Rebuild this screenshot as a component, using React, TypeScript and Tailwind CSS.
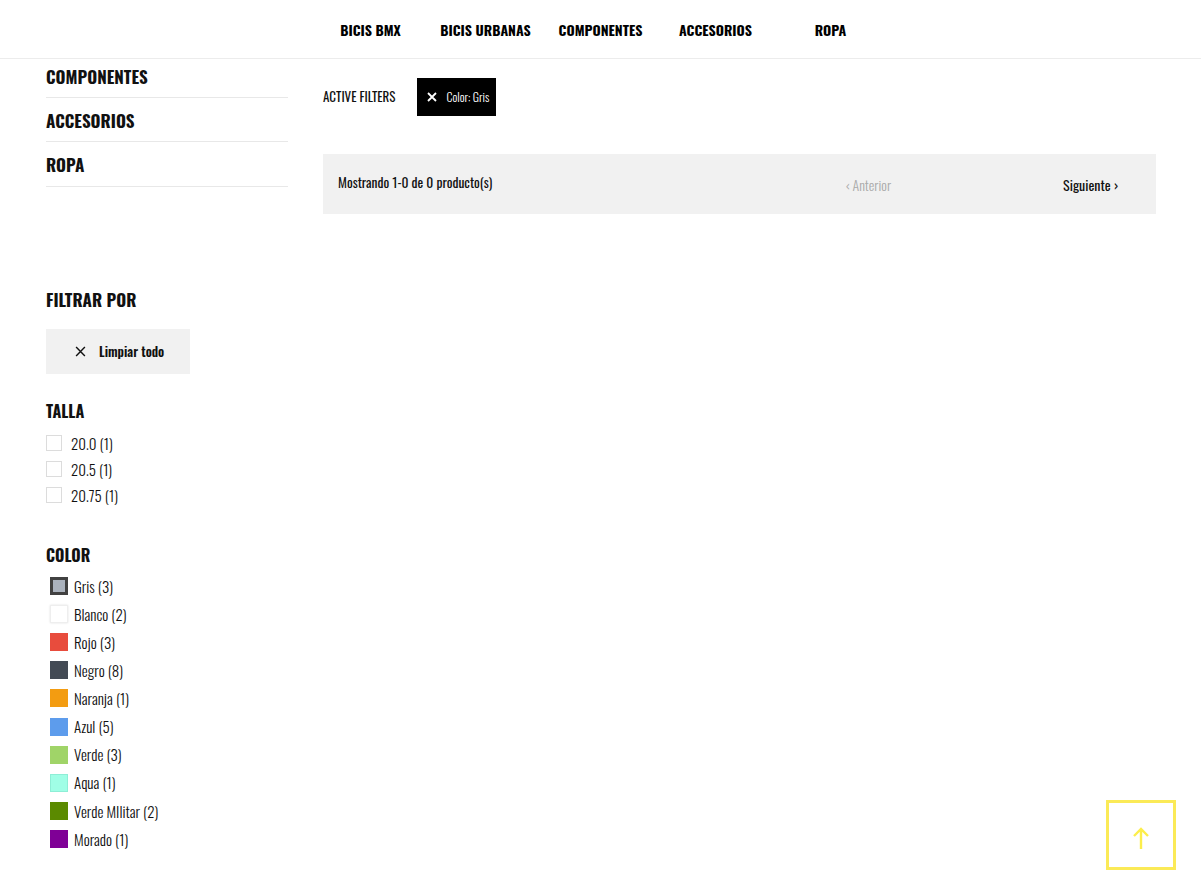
import React from "react";

const nav = ["BICIS BMX", "BICIS URBANAS", "COMPONENTES", "ACCESORIOS", "ROPA"];
const tallas = ["20.0 (1)", "20.5 (1)", "20.75 (1)"];
const colors: { name: string; count: string; cls: string }[] = [
  { name: "Gris", count: "(3)", cls: "bg-[#aab2bd] border-[3px] border-[#414141]" },
  { name: "Blanco", count: "(2)", cls: "bg-white border border-[#eeeeee] shadow-[0_0_2px_rgba(0,0,0,0.12)]" },
  { name: "Rojo", count: "(3)", cls: "bg-[#e84c3d]" },
  { name: "Negro", count: "(8)", cls: "bg-[#434a54]" },
  { name: "Naranja", count: "(1)", cls: "bg-[#f39c11]" },
  { name: "Azul", count: "(5)", cls: "bg-[#5d9cec]" },
  { name: "Verde", count: "(3)", cls: "bg-[#a0d468]" },
  { name: "Aqua", count: "(1)", cls: "bg-[#a0fee6] border border-[#8eeed6]" },
  { name: "Verde MIlitar", count: "(2)", cls: "bg-[#5b8a00]" },
  { name: "Morado", count: "(1)", cls: "bg-[#7f0096]" },
];

export default function App() {
  return (
    <div className="min-h-[895px] bg-white text-[#111] font-['Oswald',sans-serif] relative">
      <header className="h-[59px] border-b border-[#ececec] flex justify-center items-center">
        {nav.map((n) => (
          <div key={n} className="w-[115px] text-center text-[14px] font-bold text-black pt-[1px]">
            {n}
          </div>
        ))}
      </header>

      <div className="flex pl-[46px] pr-[45px] gap-[35px]">
        <aside className="w-[242px] shrink-0">
          <ul className="flex flex-col">
            <li className="h-[39px] flex items-center pb-[2px] border-b border-[#e8e8e8] text-[17px] font-bold">COMPONENTES</li>
            <li className="h-[44px] flex items-center pt-[2px] border-b border-[#e8e8e8] text-[17px] font-bold">ACCESORIOS</li>
            <li className="h-[45px] flex items-center pt-[2px] border-b border-[#e8e8e8] text-[17px] font-bold">ROPA</li>
          </ul>

          <div className="mt-[100px] text-[17px] font-bold leading-[26px]">FILTRAR POR</div>
          <button className="mt-[16px] w-[144px] h-[45px] bg-[#f1f1f1] flex items-center pl-[29px] gap-[13px] text-[13px] font-semibold">
            <svg width="11" height="11" viewBox="0 0 10 10" className="shrink-0">
              <path d="M1 1 L9 9 M9 1 L1 9" stroke="#111" strokeWidth="1.3" />
            </svg>
            <span>Limpiar todo</span>
          </button>

          <div className="mt-[26px] text-[16px] font-bold leading-[22px]">TALLA</div>
          <div className="mt-[8px] flex flex-col">
            {tallas.map((t) => (
              <label key={t} className="h-[26px] flex items-center gap-[9px] text-[15px] font-light">
                <span className="w-[16px] h-[16px] border border-[#dcdcdc] bg-white shrink-0" />
                <span>{t}</span>
              </label>
            ))}
          </div>

          <div className="mt-[36px] text-[16px] font-bold leading-[22px]">COLOR</div>
          <div className="mt-[6px] flex flex-col">
            {colors.map((c) => (
              <div key={c.name} className="h-[28.1px] flex items-center gap-[6px] pl-[4px] text-[15px] font-light">
                <span className={`w-[18px] h-[18px] shrink-0 ${c.cls}`} />
                <span>
                  {c.name} {c.count}
                </span>
              </div>
            ))}
          </div>
        </aside>

        <main className="flex-1 min-w-0">
          <div className="mt-[19px] flex items-center gap-[22px]">
            <span className="text-[13px] font-normal">ACTIVE FILTERS</span>
            <span className="h-[38px] bg-black text-white flex items-center pl-[10px] pr-[7px] gap-[9px] text-[12px] font-light">
              <svg width="10" height="10" viewBox="0 0 10 10">
                <path d="M1 1 L9 9 M9 1 L1 9" stroke="#fff" strokeWidth="1.8" />
              </svg>
              <span>Color: Gris</span>
            </span>
          </div>

          <div className="mt-[38px] h-[60px] bg-[#f1f1f1] flex items-center pl-[15px] pr-[38px] text-[14px]">
            <span className="pb-[3px] text-[13.5px] font-normal">Mostrando 1-0 de 0 producto(s)</span>
            <span className="ml-auto mr-[172px] text-[#aaaaaa] font-light">‹ Anterior</span>
            <span className="font-normal">Siguiente ›</span>
          </div>
        </main>
      </div>

      <button className="absolute left-[1106px] top-[800px] w-[70px] h-[70px] border-[3px] border-[#fbea57] flex items-center justify-center">
        <svg width="20" height="24" viewBox="0 0 20 24" fill="none" stroke="#fcee4c" strokeWidth="2.4" className="translate-y-[3px]">
          <path d="M10 23 V3 M3 10 L10 3 L17 10" />
        </svg>
      </button>
    </div>
  );
}
